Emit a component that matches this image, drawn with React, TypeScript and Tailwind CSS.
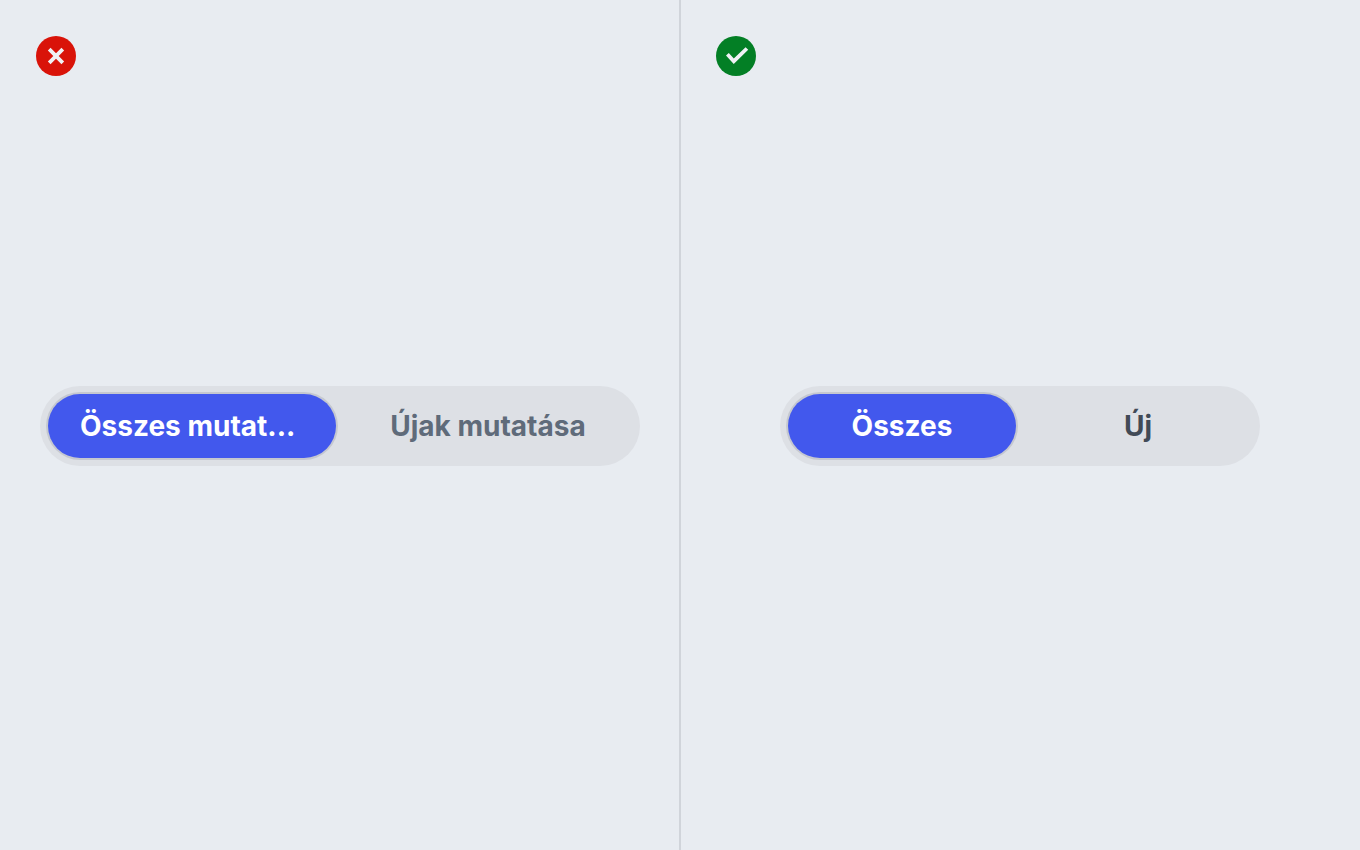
import { useState } from "react";

type Verdict = "dont" | "do";

function VerdictIcon({ verdict }: { verdict: Verdict }) {
  return (
    <svg
      className="size-10"
      viewBox="0 0 40 40"
      fill="none"
      role="img"
      aria-label={verdict === "do" ? "Helyes" : "Helytelen"}
    >
      <circle cx="20" cy="20" r="20" fill={verdict === "do" ? "#037f25" : "#d91309"} />
      <path
        d={verdict === "do" ? "M11.4 18.3L17.8 25.2L30.9 12.5" : "M13.2 13.2L26.8 26.8M26.8 13.2L13.2 26.8"}
        stroke="#f0f2f5"
        strokeWidth="3.8"
      />
    </svg>
  );
}

interface Option {
  text: string;
  shortened?: boolean;
}

interface SwitchProps {
  label: string;
  options: Option[];
  className: string;
  idleClassName: string;
}

function SegmentedSwitch({ label, options, className, idleClassName }: SwitchProps) {
  const [selected, setSelected] = useState(0);
  return (
    <div
      role="group"
      aria-label={label}
      className={`grid w-full grid-cols-2 gap-2 rounded-full bg-[#dde0e5] p-2 ${className}`}
    >
      {options.map(({ text, shortened }, index) => (
        <button
          key={text}
          type="button"
          aria-pressed={index === selected}
          onClick={() => setSelected(index)}
          className={`h-16 min-w-0 rounded-full px-8 text-[28px] leading-9 font-bold ${
            shortened ? "text-left" : "text-center"
          } ${index === selected ? "bg-[#4258ed] text-white ring-2 ring-[#c5c8d0]" : idleClassName}`}
        >
          <span className="block truncate">{text}</span>
        </button>
      ))}
    </div>
  );
}

function Panel({ verdict, children }: { verdict: Verdict; children: React.ReactNode }) {
  return (
    <section className="grid min-w-0 flex-1 grid-rows-[40px_1fr_40px] p-9">
      <VerdictIcon verdict={verdict} />
      <div className="flex items-center justify-center pt-0.5">{children}</div>
    </section>
  );
}

export default function App() {
  return (
    <main className="flex min-h-screen bg-[#e8ecf1] font-['Inter',sans-serif]">
      <Panel verdict="dont">
        <SegmentedSwitch
          label="Szűrés"
          options={[{ text: "Összes mutat...", shortened: true }, { text: "Újak mutatása" }]}
          className="max-w-[600px]"
          idleClassName="text-[#5f6b7a]"
        />
      </Panel>
      <div className="-mx-px w-0.5 bg-[#d0d4da]" />
      <Panel verdict="do">
        <SegmentedSwitch
          label="Szűrés"
          options={[{ text: "Összes" }, { text: "Új" }]}
          className="max-w-[480px]"
          idleClassName="text-[#414a56]"
        />
      </Panel>
    </main>
  );
}
